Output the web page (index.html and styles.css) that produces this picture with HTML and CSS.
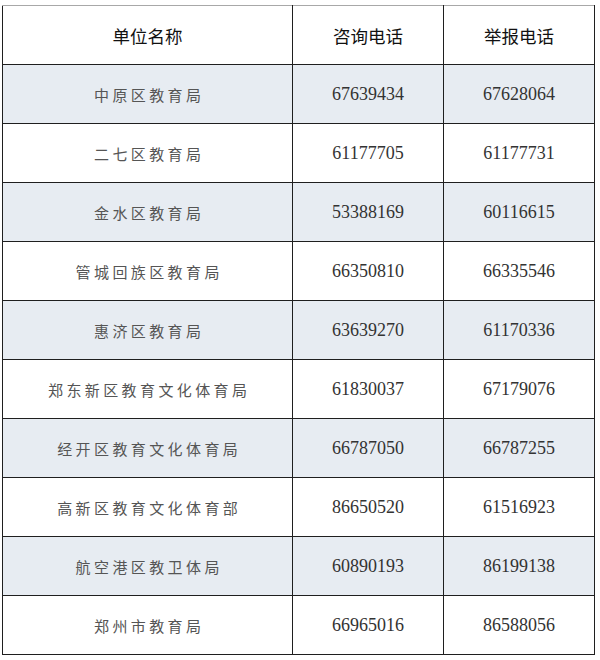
FILE: index.html
```html
<!DOCTYPE html>
<html lang="zh-CN">
<head>
<meta charset="utf-8">
<link rel="stylesheet" href="styles.css">
</head>
<body>
<table class="contacts">
  <colgroup>
    <col class="c-name">
    <col class="c-phone">
    <col class="c-phone">
  </colgroup>
  <thead>
    <tr><th>单位名称</th><th>咨询电话</th><th>举报电话</th></tr>
  </thead>
  <tbody>
    <tr class="alt"><td class="name">中原区教育局</td><td class="num">67639434</td><td class="num">67628064</td></tr>
    <tr><td class="name">二七区教育局</td><td class="num">61177705</td><td class="num">61177731</td></tr>
    <tr class="alt"><td class="name">金水区教育局</td><td class="num">53388169</td><td class="num">60116615</td></tr>
    <tr><td class="name">管城回族区教育局</td><td class="num">66350810</td><td class="num">66335546</td></tr>
    <tr class="alt"><td class="name">惠济区教育局</td><td class="num">63639270</td><td class="num">61170336</td></tr>
    <tr><td class="name">郑东新区教育文化体育局</td><td class="num">61830037</td><td class="num">67179076</td></tr>
    <tr class="alt"><td class="name">经开区教育文化体育局</td><td class="num">66787050</td><td class="num">66787255</td></tr>
    <tr><td class="name">高新区教育文化体育部</td><td class="num">86650520</td><td class="num">61516923</td></tr>
    <tr class="alt"><td class="name">航空港区教卫体局</td><td class="num">60890193</td><td class="num">86199138</td></tr>
    <tr><td class="name">郑州市教育局</td><td class="num">66965016</td><td class="num">86588056</td></tr>
  </tbody>
</table>
</body>
</html>
```
FILE: styles.css
```css
html, body {
  margin: 0;
  padding: 0;
  background: #ffffff;
}
body {
  padding: 5px 0 0 2px;
}
.contacts {
  border-collapse: collapse;
  width: 592px;
  table-layout: fixed;
  font-family: "Noto Sans CJK SC", "Noto Sans", sans-serif;
}
.c-name { width: 290px; }
.c-phone { width: 151px; }
.contacts th,
.contacts td {
  border: 1px solid #1f1f1f;
  height: 58px;
  padding: 0;
  text-align: center;
  vertical-align: middle;
}
.contacts thead th {
  border-top-color: #a8a8a8;
  font-size: 17.5px;
  font-weight: 400;
  color: #111111;
}
.contacts tr.alt td {
  background: #e7ecf2;
}
.name {
  font-size: 15px;
  letter-spacing: 3.4px;
  text-indent: 3.4px;
  color: #555555;
}
.num {
  font-family: "Liberation Serif", "DejaVu Serif", serif;
  font-size: 18px;
  color: #333333;
}
```
